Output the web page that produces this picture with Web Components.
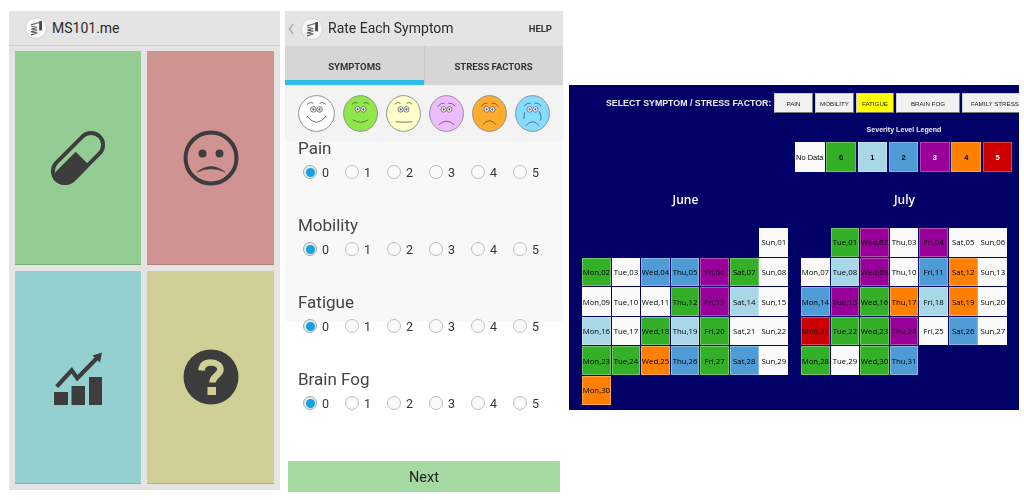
<!DOCTYPE html>
<html>
<head>
<meta charset="utf-8">
<title>MS101.me</title>
<style>
  html, body { margin: 0; background: #fff; }
  body { width: 1024px; height: 500px; overflow: hidden; font-family: Roboto, "Liberation Sans", sans-serif; }
  /* the reference is a soft, upscaled capture */
  .page { display: flex; align-items: flex-start; padding: 11px 0 0 9px; filter: blur(0.35px); }
</style>
</head>
<body>
<div class="page">
  <home-screen>
    <home-tile color="#93cd93" icon="pill"></home-tile>
    <home-tile color="#cf9491" icon="sad"></home-tile>
    <home-tile color="#94d0cf" icon="chart"></home-tile>
    <home-tile color="#d0cf95" icon="help"></home-tile>
  </home-screen>
  <rate-screen>
    <rate-row label="Pain"></rate-row>
    <rate-row label="Mobility"></rate-row>
    <rate-row label="Fatigue"></rate-row>
    <rate-row label="Brain Fog"></rate-row>
  </rate-screen>
  <calendar-panel></calendar-panel>
</div>

<script>
const LOGO = `<svg viewBox="0 0 24 24" width="22" height="22">
  <circle cx="12" cy="12" r="11.5" fill="#f6f6f6" stroke="#d2d2d2"/>
  <path d="M7 10l6 1.5-6 1.5 6.5 1.5-7 1.5 7 1.5-7 2" fill="none" stroke="#555" stroke-width="1.2"/>
  <path d="M6.5 8.5l9-2.5" stroke="#666" stroke-width="1.4"/>
  <rect x="15.5" y="4.5" width="3" height="10" fill="#444"/>
</svg>`;

class AppBar extends HTMLElement {
  constructor() {
    super();
    this.attachShadow({ mode: 'open' });
    this.shadowRoot.innerHTML = `
      <style>
        :host { display: flex; align-items: center; height: 35px; background: #e4e4e4; color: #2b2b2b; font-size: 14px; }
        .back { width: 6px; margin: 0 7px 0 3px; display: flex; }
        .logo { display: flex; margin-right: 5px; }
        .title { flex: 1; padding-bottom: 1px; }
        ::slotted(*) { margin-right: 11px; }
      </style>
      <span class="back"></span>
      <span class="logo">${LOGO}</span>
      <span class="title"></span>
      <slot></slot>
    `;
  }
  connectedCallback() {
    this.shadowRoot.querySelector('.title').textContent = this.getAttribute('title-text');
    const back = this.shadowRoot.querySelector('.back');
    if (this.hasAttribute('back')) {
      back.innerHTML = `<svg viewBox="0 0 6 12" width="6" height="12"><path d="M5 1L1.5 6 5 11" fill="none" stroke="#b0b0b0" stroke-width="1.6"/></svg>`;
    } else {
      back.style.margin = '0 0 0 10px';
    }
  }
}
customElements.define('app-bar', AppBar);

const ICONS = {
  pill: `<svg viewBox="0 0 56 56" width="56" height="56">
    <defs><clipPath id="cap"><rect x="-4.5" y="14" width="65" height="28" rx="14" transform="rotate(-45 28 28)"/></clipPath></defs>
    <rect x="-2.5" y="16" width="61" height="24" rx="12" transform="rotate(-45 28 28)" fill="none" stroke="#3d3d3d" stroke-width="4"/>
    <path d="M5.7 41.7L25.7 21.7 37.3 33.3 37 56 0 56Z" fill="#3d3d3d" clip-path="url(#cap)"/>
  </svg>`,
  sad: `<svg viewBox="0 0 56 56" width="56" height="56">
    <circle cx="28" cy="28" r="25.5" fill="none" stroke="#3d3d3d" stroke-width="4"/>
    <circle cx="19.500" cy="23.500" r="4" fill="#3d3d3d"/><circle cx="36.500" cy="23.500" r="4" fill="#3d3d3d"/>
    <path d="M14 42Q28 31 42 42Q28 35.500 14 42Z" fill="#3d3d3d" stroke="#3d3d3d" stroke-width="0.600"/>
  </svg>`,
  chart: `<svg viewBox="0 0 56 56" width="56" height="56">
    <g fill="#3d3d3d"><rect x="4" y="43" width="14" height="13"/><rect x="21.500" y="37" width="13.500" height="19"/><rect x="39" y="28" width="13" height="28"/></g>
    <path d="M6.700 37.700L21.700 21.300 27.300 29.300 47 9" fill="none" stroke="#3d3d3d" stroke-width="4.200"/>
    <path d="M52 3.500L50 13.500 42.500 6.500Z" fill="#3d3d3d"/>
  </svg>`,
  help: `<svg viewBox="0 0 56 56" width="56" height="56">
    <circle cx="28" cy="28" r="27.500" fill="#3d3d3d"/>
    <path d="M18.500 21.500C19 15.500 23 13.500 28 13.500C33.500 13.500 37.500 16.500 37.500 20.500C37.500 26 29.500 26.500 29.500 33.500" fill="none" stroke="#d0cf95" stroke-width="6.500"/>
    <rect x="24.500" y="38" width="8.500" height="8" fill="#d0cf95"/>
  </svg>`
};

class HomeTile extends HTMLElement {
  constructor() {
    super();
    this.attachShadow({ mode: 'open' });
    this.shadowRoot.innerHTML = `
      <style>
        :host { display: flex; align-items: center; justify-content: center; border-bottom: 1px solid rgba(0,0,0,.14); box-sizing: border-box; }
      </style>
      <span id="icon" style="display:flex"></span>
    `;
  }
  connectedCallback() {
    this.style.background = this.getAttribute('color');
    this.shadowRoot.getElementById('icon').innerHTML = ICONS[this.getAttribute('icon')];
  }
}
customElements.define('home-tile', HomeTile);

class HomeScreen extends HTMLElement {
  constructor() {
    super();
    this.attachShadow({ mode: 'open' });
    this.shadowRoot.innerHTML = `
      <style>
        :host { display: block; width: 271px; height: 479px; background: #e4e4e4; flex: none; }
        .bar { height: 34px; border-bottom: 1px solid #cfcfcf; }
        .grid { display: grid; grid-template-columns: 126px 127px; grid-template-rows: 214px 213px; gap: 6px; padding: 5px 0 0 6px; }
      </style>
      <app-bar class="bar" title-text="MS101.me"></app-bar>
      <div class="grid"><slot></slot></div>
    `;
  }
}
customElements.define('home-screen', HomeScreen);

class FaceIcon extends HTMLElement {
  constructor() {
    super();
    this.attachShadow({ mode: 'open' });
  }
  connectedCallback() {
    const fill = this.getAttribute('fill');
    const mood = Number(this.getAttribute('mood'));
    const mouths = [
      'M9 21Q18 32 27 21M8 22l2-2M28 22l-2-2',
      'M10 24Q18 29 26 24',
      'M10 26Q18 27 27 26',
      'M10 29Q18 22 26 29',
      'M11 29Q18 21 25 29',
      'M11 30Q18 22 25 30'
    ];
    const brows = mood < 3
      ? 'M9 9Q12 6 15 8M21 8Q24 6 27 9'
      : 'M9 11Q13 7 16 8M20 8Q24 7 27 11';
    const tear = mood === 5 ? '<path d="M25 16Q28 22 26 25M10 17L9 23" fill="none" stroke="#5a7f95" stroke-width="1.2"/>' : '';
    const ink = mood === 5 ? '#557' : '#555';
    this.shadowRoot.innerHTML = `
      <style>:host { display: flex; }</style>
      <svg viewBox="0 0 36 36" width="${this.getAttribute('size') || 35}" height="37" preserveAspectRatio="none">
        <circle cx="18" cy="18" r="17.400" fill="${fill}" stroke="#8a8a8a" stroke-width="0.900"/>
        <g fill="none" stroke="${ink}" stroke-width="0.800">
          <path d="${brows}"/>
          <path d="${mouths[mood]}"/>
          <circle cx="15" cy="14" r="2.700" fill="#fff"/><circle cx="21" cy="14" r="2.700" fill="#fff"/>
        </g>
        <circle cx="15" cy="14" r="1.100" fill="#555"/><circle cx="21" cy="14" r="1.100" fill="#555"/>
        ${tear}
      </svg>
    `;
  }
}
customElements.define('face-icon', FaceIcon);

class RadioOpt extends HTMLElement {
  constructor() {
    super();
    this.attachShadow({ mode: 'open' });
    this.shadowRoot.innerHTML = `
      <style>
        :host { display: flex; align-items: center; height: 14px; font-size: 12.500px; color: #333; }
        .dot { width: 12px; height: 12px; border: 1px solid #bdbdbd; border-radius: 50%; background: #fafafa; margin-right: 5px; display: flex; align-items: center; justify-content: center; }
        :host([checked]) .dot { border-color: #a9a9a9; background: #e3e9ec; }
        :host([checked]) .dot::after { content: ""; width: 9px; height: 9px; border-radius: 50%; background: #12a3dc; }
      </style>
      <span class="dot"></span><slot></slot>
    `;
  }
}
customElements.define('radio-opt', RadioOpt);

class RateRow extends HTMLElement {
  constructor() {
    super();
    this.attachShadow({ mode: 'open' });
    this.shadowRoot.innerHTML = `
      <style>
        :host { display: block; height: 77px; padding-left: 13px; box-sizing: border-box; }
        .label { font-size: 17px; line-height: 14px; color: #444; }
        .opts { display: grid; grid-template-columns: repeat(6, 42px); margin: 10px 0 0 5px; }
      </style>
      <div class="label"></div>
      <div class="opts"></div>
    `;
  }
  connectedCallback() {
    this.shadowRoot.querySelector('.label').textContent = this.getAttribute('label');
    const opts = this.shadowRoot.querySelector('.opts');
    for (let i = 0; i < 6; i++) {
      const opt = document.createElement('radio-opt');
      if (i === 0) opt.setAttribute('checked', '');
      opt.textContent = i;
      opts.appendChild(opt);
    }
  }
}
customElements.define('rate-row', RateRow);

class RateScreen extends HTMLElement {
  constructor() {
    super();
    this.attachShadow({ mode: 'open' });
    const faces = [['#ffffff', 37], ['#8fe84a'], ['#ffffc8'], ['#eebcff'], ['#ffab2e'], ['#84dcff']];
    this.shadowRoot.innerHTML = `
      <style>
        :host { display: block; width: 278px; margin-left: 5px; flex: none; }
        .help { font-size: 9.500px; font-weight: 700; color: #333; }
        .tabs { display: grid; grid-template-columns: 139px 139px; height: 39px; background: #d6d6d6; font-size: 9.500px; font-weight: 700; color: #333; }
        .tab { display: flex; align-items: center; justify-content: center; height: 39px; padding-top: 1px; box-sizing: border-box; }
        .tab.on { padding-top: 6px; border-bottom: 5px solid #2ebce8; }
        .tab + .tab { box-shadow: inset 1px 0 0 0 #cacaca; }
        .faces { display: flex; gap: 8px; align-items: center; height: 57px; background: #f3f3f3; padding-left: 13px; box-sizing: border-box; }
        .rows { margin-top: -1px; background: linear-gradient(#f8f8f8, #f8f8f8) no-repeat top / 100% 181px; }
        .next { margin: 12px 3px 0; height: 31px; padding-top: 2px; box-sizing: border-box; background: #a5dba3; display: flex; align-items: center; justify-content: center; font-size: 14.500px; color: #222; }
      </style>
      <app-bar title-text="Rate Each Symptom" back><span class="help">HELP</span></app-bar>
      <div class="tabs"><div class="tab on">SYMPTOMS</div><div class="tab">STRESS FACTORS</div></div>
      <div class="faces">${faces.map((f, i) => `<face-icon fill="${f[0]}" mood="${i}" size="${f[1] || 35}"></face-icon>`).join('')}</div>
      <div class="rows"><slot></slot></div>
      <div class="next">Next</div>
    `;
  }
}
customElements.define('rate-screen', RateScreen);

const SEV = {
  w: ['#fafafa', '#000'], g: ['#33b028', '#000'], l: ['#a8d8e8', '#000'], b: ['#4f9bd5', '#000'],
  p: ['#990099', '#000'], o: ['#ff8000', '#000'], r: ['#cc0000', '#000']
};

class CalDay extends HTMLElement {
  constructor() {
    super();
    this.attachShadow({ mode: 'open' });
    this.shadowRoot.innerHTML = `
      <style>
        :host { display: flex; align-items: center; justify-content: center; box-sizing: border-box; border: 1px solid rgba(255,255,255,.3); font: 7.800px "Open Sans", "Liberation Sans", sans-serif; white-space: nowrap; }
      </style>
      <slot></slot>
    `;
  }
  connectedCallback() {
    const s = SEV[this.getAttribute('sev')];
    this.style.background = s[0];
    this.style.color = s[1];
  }
}
customElements.define('cal-day', CalDay);

class CalMonth extends HTMLElement {
  constructor() {
    super();
    this.attachShadow({ mode: 'open' });
    this.shadowRoot.innerHTML = `
      <style>
        :host { display: block; width: 207px; flex: none; }
        .name { text-align: center; font: 600 12px/16px "Open Sans", sans-serif; color: #fff; }
        .grid { display: grid; grid-template-columns: repeat(7, 28.700px); grid-auto-rows: 28.700px; gap: 0.900px; margin-top: 20px; }
      </style>
      <div class="name"></div>
      <div class="grid"></div>
    `;
  }
  connectedCallback() {
    const names = ['Mon', 'Tue', 'Wed', 'Thu', 'Fri', 'Sat', 'Sun'];
    const start = Number(this.getAttribute('start'));
    const data = this.getAttribute('data');
    this.shadowRoot.querySelector('.name').textContent = this.getAttribute('name');
    const grid = this.shadowRoot.querySelector('.grid');
    for (let i = 0; i < data.length; i++) {
      const cell = document.createElement('cal-day');
      const col = (start + i) % 7;
      cell.setAttribute('sev', data[i]);
      cell.textContent = names[col] + ',' + String(i + 1).padStart(2, '0');
      if (i === 0) cell.style.gridColumnStart = col + 1;
      grid.appendChild(cell);
    }
  }
}
customElements.define('cal-month', CalMonth);

class CalendarPanel extends HTMLElement {
  constructor() {
    super();
    this.attachShadow({ mode: 'open' });
    const btns = [['PAIN', 39], ['MOBILITY', 39], ['FATIGUE', 38, 1], ['BRAIN FOG', 64]];
    const legend = [['No Data', '#fafafa', '#000'], ['0', '#33b028', '#000'], ['1', '#a8d8e8', '#000'], ['2', '#4f9bd5', '#000'], ['3', '#990099', '#fff'], ['4', '#ff8000', '#000'], ['5', '#cc0000', '#fff']];
    this.shadowRoot.innerHTML = `
      <style>
        :host { display: block; width: 450px; height: 325px; margin: 74px 0 0 6px; background: #000066; overflow: hidden; flex: none; font-family: "Liberation Sans", sans-serif; }
        .select { display: flex; align-items: center; height: 20px; margin-top: 8px; padding-left: 37px; white-space: nowrap; }
        .select-label { width: 168px; flex: none; font-size: 8.800px; font-weight: 700; color: #eee; }
        .btn { flex: none; box-sizing: border-box; height: 20px; margin-right: 2px; display: flex; align-items: center; justify-content: center; background: #f1f1f1; border: 1px solid #ccc; border-right-color: #777; border-bottom-color: #777; font-size: 6.200px; color: #222; }
        .btn.on { background: #ffff00; }
        .btn.last { width: 62px; justify-content: flex-start; padding-left: 8px; }
        .legend-title { width: 100px; margin: 12px 0 0 285px; text-align: center; font-size: 7.100px; font-weight: 700; line-height: 10px; color: #eee; white-space: nowrap; }
        .legend { display: grid; grid-template-columns: repeat(7, 29.500px); gap: 1.800px; margin: 7px 0 0 226px; }
        .legend div { height: 30px; display: flex; align-items: center; justify-content: center; box-sizing: border-box; border: 1px solid rgba(255,255,255,.25); font-size: 7.500px; white-space: nowrap; }
        .legend .num { font-weight: 700; }
        .months { display: flex; gap: 12px; margin-top: 20px; padding-left: 13px; }
      </style>
      <div class="select">
        <div class="select-label">SELECT SYMPTOM / STRESS FACTOR:</div>
        ${btns.map(b => `<div class="btn${b[2] ? ' on' : ''}" style="width:${b[1]}px">${b[0]}</div>`).join('')}
        <div class="btn last">FAMILY STRESS</div>
      </div>
      <div class="legend-title">Severity Level Legend</div>
      <div class="legend">${legend.map((l, i) => `<div class="${i ? 'num' : ''}" style="background:${l[1]};color:${l[2]}">${l[0]}</div>`).join('')}</div>
      <div class="months">
        <cal-month name="June" start="6" data="wgwbbpgwwwwgplwlwglgwwggobgbwo"></cal-month>
        <cal-month name="July" start="1" data="gpwpwwwlpwbowbpgolowrggpwbwgwgb"></cal-month>
      </div>
    `;
  }
}
customElements.define('calendar-panel', CalendarPanel);
</script>
</body>
</html>
